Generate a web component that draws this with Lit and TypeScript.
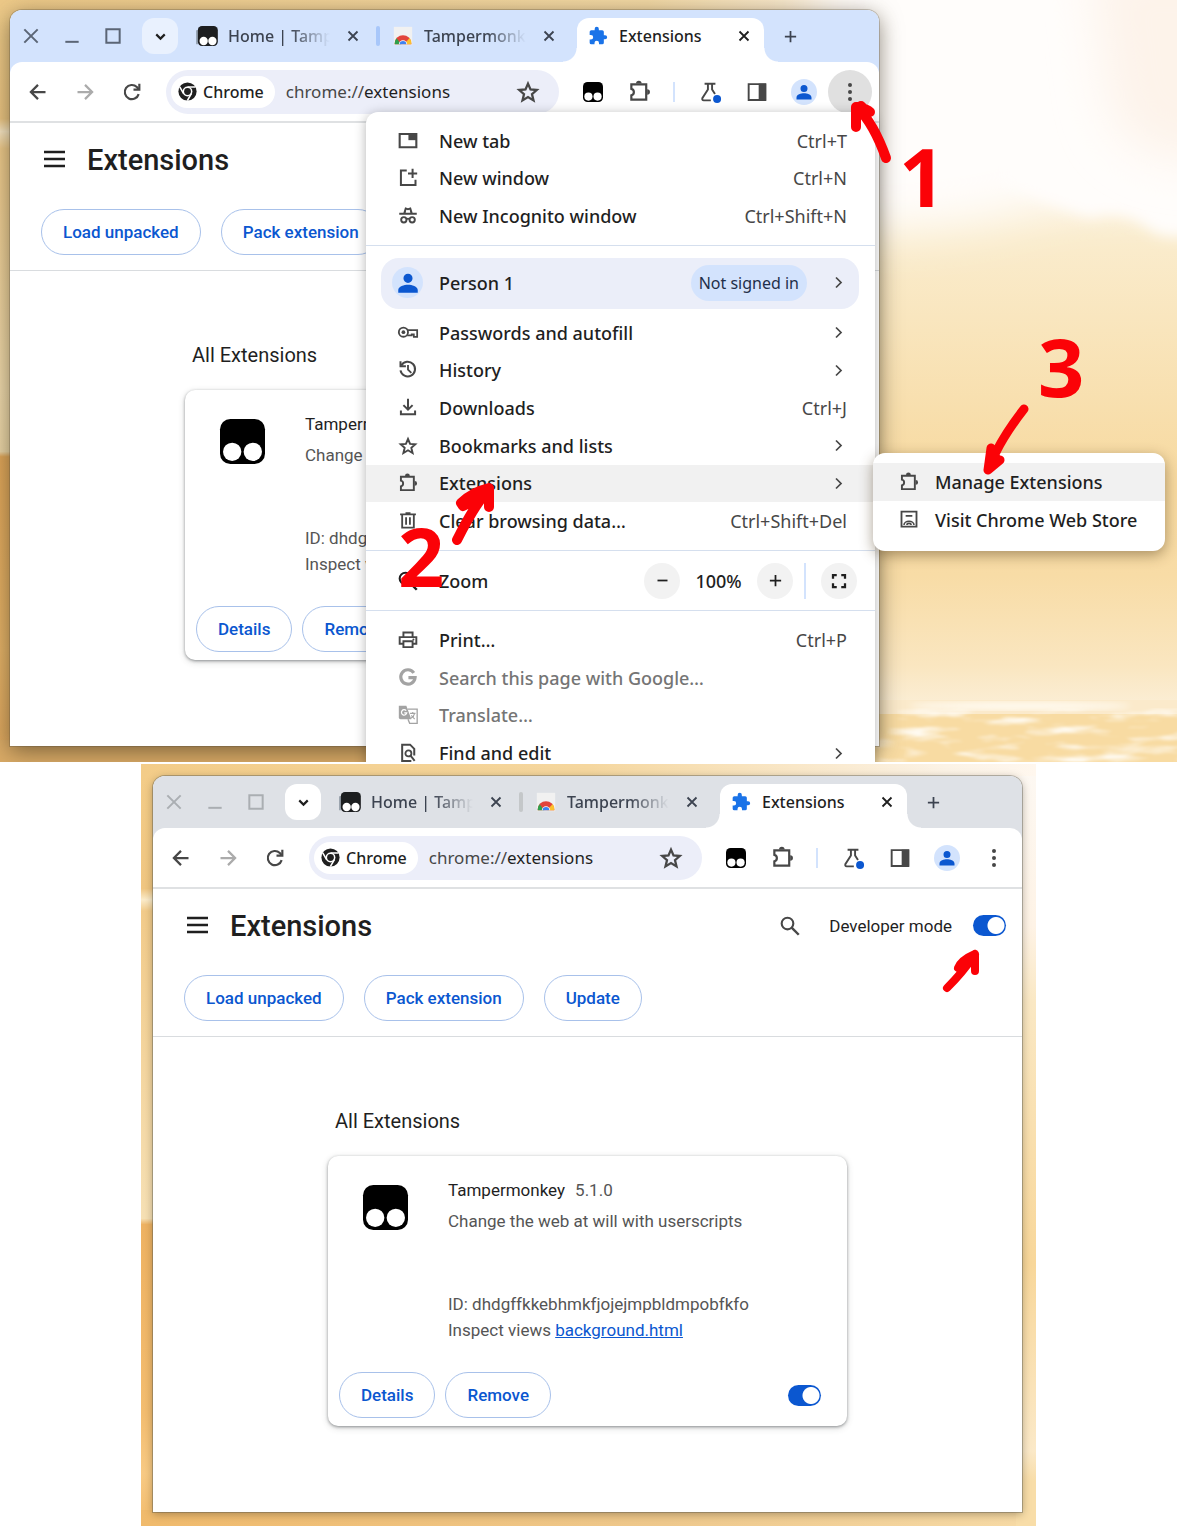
import { LitElement, html, svg, css, nothing } from "lit";
import { customElement, property } from "lit/decorators.js";
import { classMap } from "lit/directives/class-map.js";

const line = (d: string, w = 2) =>
  svg`<path d=${d} fill="none" stroke="currentColor" stroke-width=${w} />`;
const solid = (d: string) => svg`<path d=${d} fill="currentColor" fill-rule="evenodd" />`;

const PUZZLE = "M3.500 4.500H19V20.500H3.500V16C7 15.400 7 9.800 3.500 9.200Z";

const ICONS: Record<string, unknown> = {
  close: line("M6 6L18 18M18 6L6 18", 2.4),
  winClose: line("M4 4L20 20M20 4L4 20", 2.4),
  winMin: line("M4 19H20", 2.4),
  winMax: line("M4 4H20V20H4Z", 2.4),
  down: line("M6 9L12 15L18 9", 3),
  plus: line("M12 3V21M3 12H21", 2.8),
  minus: line("M4 12H20", 2.8),
  right: line("M8 4L16 12L8 20", 2.8),
  back: line("M21 12H4M12 3.500L3.500 12L12 20.500", 2.7),
  forward: line("M3 12H20M12 3.500L20.500 12L12 20.500", 2.7),
  reload: svg`${line("M20 14.500A8.500 8.500 0 1 1 17.800 6L20 8.600", 2.6)}${line("M20.800 2.200V9.200H13.800", 2.6)}`,
  star: line("M12 3.600L14.5 9.4L20.8 10L16 14.2L17.5 20.4L12 17.1L6.5 20.4L8 14.2L3.2 10L9.5 9.4Z", 2.3),
  monkey: svg`<rect width="24" height="24" rx="5.500" fill="#000" />
    <circle cx="6.500" cy="17.500" r="4.900" fill="#fff" /><circle cx="17.500" cy="17.500" r="4.900" fill="#fff" />`,
  monkeyTab: svg`<path d="M0 5V22" stroke="#7c8794" stroke-width="1.600" />
    <rect x="1" y="0" width="24" height="24" rx="5" fill="#1c1e20" />
    <circle cx="8" cy="18" r="5" fill="#fff" /><circle cx="18.500" cy="18" r="5" fill="#fff" />`,
  store: svg`<rect x="1" y="1" width="22" height="22" fill="#f1f1f1" />
    <path d="M2 21A10 10 0 0 1 22 21L22 22H2Z" fill="#e2443a" />
    <path d="M2 22A10.500 10.500 0 0 1 4.200 14.600L10 22Z" fill="#2fa04c" />
    <path d="M22 22A10 10 0 0 0 20 14.500L13 22Z" fill="#fbc02d" />
    <path d="M7 22A5 5 0 0 1 17 22Z" fill="#fff" /><path d="M8 22A4 4 0 0 1 16 22Z" fill="#3f82f0" />`,
  puzzleFill: solid("M20.500 11H19V7a2 2 0 0 0-2-2h-4V3.500a2.500 2.500 0 0 0-5 0V5H4a2 2 0 0 0-2 2v3.800h1.500a2.700 2.700 0 0 1 0 5.400H2V20a2 2 0 0 0 2 2h3.800v-1.500a2.700 2.700 0 0 1 5.400 0V22H17a2 2 0 0 0 2-2v-4h1.500a2.500 2.500 0 0 0 0-5z"),
  puzzle: svg`${line(PUZZLE, 2.3)}${solid("M8.400 3.600a2.900 2.900 0 0 1 5.800 0ZM20 9.600a2.900 2.900 0 0 1 0 5.800Z")}`,
  chrome: svg`<circle cx="12" cy="12" r="11.500" fill="currentColor" /><circle cx="12" cy="12" r="6.200" fill="#fff" />
    <circle cx="12" cy="12" r="4.300" fill="currentColor" />
    <path d="M12 6.400H22.200M7.100 14.800L2.200 6.200M16.900 14.800L11.800 23.500" stroke="#fff" stroke-width="2" />`,
  flask: svg`${line("M5.500 2H18.500M9.500 2V9L2.800 19.500Q2.200 22 4.500 22H13M14.500 2V9L18 14.500", 2.3)}
    <circle cx="20.500" cy="20.500" r="4.800" fill="#0b57d0" />`,
  panel: svg`${line("M2 2.500H22V21.500H2Z", 2.300)}${solid("M14 2H23V22H14Z")}`,
  person: solid("M12 3.500a4.200 4.200 0 1 1 0 8.400 4.200 4.200 0 0 1 0-8.400ZM3 21V18.500C3 15 8.500 13.500 12 13.500S21 15 21 18.500V21Z"),
  dots: svg`<circle cx="12" cy="3.500" r="2.400" fill="currentColor" /><circle cx="12" cy="12" r="2.400" fill="currentColor" />
    <circle cx="12" cy="20.500" r="2.400" fill="currentColor" />`,
  burger: line("M0 3.500H24M0 11.500H24M0 19.500H24", 2.900),
  search: svg`<circle cx="9" cy="9" r="7" fill="none" stroke="currentColor" stroke-width="2.500" />${line("M14 14L22.500 22.500", 2.900)}`,
  tab: svg`${line("M2 3.500H22V19.500H2Z", 2.500)}${solid("M12.500 3.500H22V11H12.500Z")}`,
  newWindow: line("M10.500 3H3.500V20.500H21V14M17.500 1V12M12 6.500H23", 2.400),
  incognito: svg`${solid("M6.500 8L8.500 1.500L12 2.600L15.500 1.500L17.500 8H22.500V10.500H1.500V8ZM9.200 8H14.800L14 4.500L12 5.200L10 4.500Z")}
    <circle cx="7" cy="16.500" r="3.200" fill="none" stroke="currentColor" stroke-width="2.300" />
    <circle cx="17" cy="16.500" r="3.200" fill="none" stroke="currentColor" stroke-width="2.300" />${line("M10 15.800Q12 14.600 14 15.800", 2)}`,
  key: svg`<circle cx="6.500" cy="11" r="5.500" fill="none" stroke="currentColor" stroke-width="2.200" />
    <circle cx="6.500" cy="11" r="2.200" fill="currentColor" />${line("M11 8.500H23V16.500H19V13.500H16.500V14.800H11", 2.100)}`,
  history: svg`${line("M4 6.500A8.800 8.800 0 1 1 3 12.500", 2.400)}${line("M3 1.500V7.500H9.500", 2.400)}${line("M12 6V11.500L16 15.500", 2.200)}`,
  download: line("M12 1V13.500M6.500 8.500L12 14L17.500 8.500M3.500 15V19.500H20.500V15", 2.400),
  trash: line("M2.500 4H21.500M9 2.500H15M5 4V20H19V4M9.700 7.500V16.500M14.300 7.500V16.500", 2.200),
  print: svg`${line("M6.500 7.500V3H17.500V7.500M6 16.500H2V8.500H22V16.500H18M6.500 13.500H17.500V20.500H6.500Z", 2.300)}<circle cx="18.500" cy="11.500" r="1.200" fill="currentColor" />`,
  google: line("M19 5.800A8.600 8.600 0 1 0 20.500 11.500H12.500", 3.800),
  translate: svg`<path d="M1 1H10L16 17H3Q1 17 1 15Z" fill="currentColor" />
    <path d="M11.500 5H23V22H14L12 17" fill="none" stroke="currentColor" stroke-width="1.600" />
    <path d="M9.800 6.800A3.200 3.200 0 1 0 10.500 9.500H7.500" fill="none" stroke="#fff" stroke-width="1.500" />
    <path d="M14.500 10H21M17.700 8.500V10M20 10Q19 14 15.500 16M16 12.500L20 17" fill="none" stroke="currentColor" stroke-width="1.300" />`,
  find: svg`${line("M19.500 15V7L14.500 2H5V21.500H16", 2.400)}<circle cx="12.500" cy="12.500" r="3.600" fill="none" stroke="currentColor" stroke-width="2.200" />${line("M15 15L20 21.500", 2.400)}`,
  fullscreen: line("M4 9V4H9M15 4H20V9M20 15V20H15M9 20H4V15", 3),
  shop: svg`${line("M3 2H21V20H3Z", 2.200)}${line("M8 7H16M6 18A6 4.500 0 0 1 18 18M9.500 18A2.500 2 0 0 1 14.500 18", 1.900)}`,
};

@customElement("ui-icon")
class UiIcon extends LitElement {
  @property() name = "";
  static styles = css`
    :host { display: inline-flex; flex: none; width: 20px; height: 20px; }
    svg { display: block; width: 100%; height: 100%; overflow: visible; }
  `;
  render() {
    return html`<svg viewBox="0 0 24 24" aria-hidden="true">${ICONS[this.name] ?? nothing}</svg>`;
  }
}

const base = css`
  * { box-sizing: border-box; }
  button {
    display: inline-flex; align-items: center; justify-content: center; flex: none;
    margin: 0; padding: 0; border: 0; background: none; color: inherit; font: inherit;
  }
`;

@customElement("browser-window")
class BrowserWindow extends LitElement {
  @property({ type: Boolean, reflect: true }) inactive = false;
  @property({ type: Boolean, attribute: "menu-open" }) menuOpen = false;

  static styles = [base, css`
    :host {
      display: block; border-radius: 12px 12px 0 0; background: #fff; color: #1f1f1f;
      font: 500 16px/20px "Noto Sans", sans-serif;
      box-shadow: 0 0 0 1px rgba(90, 80, 60, .3), 0 5px 22px rgba(60, 50, 30, .6);
      --strip: #d3e3fd; --chip: #e9f1fe; --tick: #a8c7fa; --ctl: #5b6575;
    }
    :host([inactive]) {
      --strip: #dee1e6; --chip: #fff; --tick: #c4c7c9; --ctl: #aaaeb2;
      box-shadow: 0 0 0 1px rgba(90, 90, 80, .4), 0 2px 8px rgba(60, 50, 30, .4);
    }
    .strip {
      display: flex; align-items: center; height: 52px; padding-left: 11px;
      border-radius: 12px 12px 0 0; background: var(--strip); color: #3c4350;
    }
    .ctl { width: 41px; color: var(--ctl); }
    .ctl:first-child { width: 20px; margin-right: 10px; }
    .ctl.mid { width: 42px; }
    .drop { width: 36px; height: 36px; margin: 0 18px 0 8px; border-radius: 12px; background: var(--chip); color: #1f1f1f; }
    .drop ui-icon { width: 17px; height: 17px; }
    .tab { display: flex; align-items: center; flex: 0 1 auto; min-width: 0; }
    .fav { width: 20px; height: 20px; margin: 0 11px 0 1px; }
    .label {
      flex: none; width: 104px; overflow: hidden; white-space: nowrap;
      -webkit-mask-image: linear-gradient(90deg, #000 60%, transparent 98%);
      mask-image: linear-gradient(90deg, #000 60%, transparent 98%);
    }
    .x { width: 22px; height: 22px; margin-left: 10px; }
    .x ui-icon { width: 18px; height: 18px; }
    .tick { flex: none; width: 4px; height: 20px; margin: 0 12px; border-radius: 2px; background: var(--tick); }
    .active {
      position: relative; align-self: flex-end; flex: none; width: 187px; height: 44px; margin-left: 17px; padding: 0 9px 8px 10px;
      border-radius: 12px 12px 0 0; background: #fff; color: #1f1f1f;
    }
    .active::before, .active::after {
      content: ""; position: absolute; bottom: 0; width: 14px; height: 14px;
    }
    .active::before { right: 100%; background: radial-gradient(circle at 0 0, transparent 13px, #fff 14px); }
    .active::after { left: 100%; background: radial-gradient(circle at 100% 0, transparent 13px, #fff 14px); }
    .active .fav { color: #1a73e8; }
    .active .label { flex: 1; -webkit-mask-image: none; mask-image: none; }
    .new { width: 28px; height: 28px; margin-left: 12px; }
    .new ui-icon { width: 15px; height: 15px; }
    .strip-back { background: var(--strip); }
    .toolbar {
      display: flex; align-items: center; height: 61px; padding: 0 5px 0 4px;
      border-radius: 12px 12px 0 0; border-bottom: 2px solid #dfe1e3; color: #474747;
      background: #fff;
    }
    .tool { width: 47px; height: 44px; border-radius: 22px; }
    .tool.off { color: #ababab; }
    .tool.wide ui-icon { width: 23px; height: 23px; }
    .tool.lit { width: 44px; margin: 0 2px 0 1px; background: #e0e0e0; }
    .omni {
      display: flex; align-items: center; flex: 1; min-width: 0; height: 44px; margin: 0 10px 0 11px;
      padding: 0 19px 0 5px; border-radius: 22px; background: #eceef9;
    }
    .chip {
      display: flex; align-items: center; gap: 6px; flex: none; height: 32px; padding: 0 11px 0 7px;
      border-radius: 16px; background: #fff; color: #1f1f1f;
    }
    .chip ui-icon { width: 19px; height: 19px; }
    .url {
      flex: 1; min-width: 0; white-space: nowrap; margin-left: 11px;
      font-weight: 400; font-size: 17px; color: #474747;
    }
    .url b { font-weight: 400; color: #1f1f1f; }
    .omni ui-icon.star { width: 24px; height: 24px; }
    .bar { flex: none; width: 2px; height: 20px; margin: 0 11px 0 10px; background: #d3e3fd; }
    .avatar { display: flex; align-items: center; justify-content: center; width: 26px; height: 26px; border-radius: 50%; background: #d3e3fd; color: #0b57d0; }
    .page { font-family: Roboto, sans-serif; font-weight: 400; font-size: 17px; }
    .head { display: flex; align-items: center; height: 73px; padding: 0 16px 0 34px; }
    .burger ui-icon { width: 21px; height: 21px; }
    h1 { flex: 1; margin: 0 0 0 22px; font-size: 29px; line-height: 32px; font-weight: 500; }
    h2 { margin: 0; padding: 0 7px; font-size: 20px; line-height: 24px; font-weight: 400; }
    .find { width: 20px; margin-right: 29px; color: #474747; }
    .switch { display: flex; align-items: center; gap: 21px; }
    .switch input {
      appearance: none; flex: none; width: 33px; height: 21px; margin: 0; border-radius: 11px;
      background: radial-gradient(circle at 23px 50%, #fff 8px, #0b57d0 9px);
    }
    .actions { display: flex; gap: 20px; padding: 13px 31px 15px; border-bottom: 1px solid #d9dcdf; }
    .pill {
      height: 46px; padding: 0 21px; border: 1px solid #a8c1ea; border-radius: 23px;
      color: #0b57d0; font-weight: 500; font-size: 17px; white-space: nowrap;
    }
    .list { max-width: 519px; margin: 0 auto; padding: 72px 0 86px; }
    .card {
      display: grid; grid-template-columns: 45px 1fr; column-gap: 40px;
      margin-top: 23px; padding: 24px 26px 8px 35px; border-radius: 10px; background: #fff;
      box-shadow: 0 1px 3px rgba(60, 64, 67, .5), 0 2px 7px rgba(60, 64, 67, .2); color: #5f6368;
    }
    .logo { width: 45px; height: 45px; margin-top: 5px; }
    .info { font-size: 17px; line-height: 20px; white-space: nowrap; color: #555; }
    .info p { margin: 0; }
    .info .name { color: #1f1f1f; margin-right: 10px; }
    .info .desc { margin: 11px 0 63px; }
    .info .views { margin-top: 6px; }
    a { color: #0b57d0; }
    .foot { grid-column: 1 / -1; display: flex; align-items: center; gap: 10px; margin: 32px 0 0 -24px; }
    .foot .switch { margin-left: auto; }
  `];

  private tool(icon: string, label: string, cls = {}) {
    return html`<button class=${classMap({ tool: true, ...cls })} aria-label=${label}><ui-icon name=${icon}></ui-icon></button>`;
  }

  private tab(icon: string, text: string, active = false) {
    return html`<div class=${classMap({ tab: true, active })}>
      <ui-icon class="fav" name=${icon}></ui-icon><span class="label">${text}</span>
      <button class="x" aria-label="Close tab"><ui-icon name="close"></ui-icon></button>
    </div>`;
  }

  render() {
    return html`
      <div class="strip">
        <button class="ctl" aria-label="Close"><ui-icon name="winClose"></ui-icon></button>
        <button class="ctl" aria-label="Minimize"><ui-icon name="winMin"></ui-icon></button>
        <button class="ctl mid" aria-label="Maximize"><ui-icon name="winMax"></ui-icon></button>
        <button class="drop" aria-label="Search tabs"><ui-icon name="down"></ui-icon></button>
        ${this.tab("monkeyTab", "Home | Tampermonkey")}
        <span class="tick"></span>
        ${this.tab("store", "Tampermonkey")}
        ${this.tab("puzzleFill", "Extensions", true)}
        <button class="new" aria-label="New tab"><ui-icon name="plus"></ui-icon></button>
      </div>
      <div class="strip-back">
        <div class="toolbar">
          ${this.tool("back", "Back")}${this.tool("forward", "Forward", { off: true })}${this.tool("reload", "Reload")}
          <div class="omni">
            <span class="chip"><ui-icon name="chrome"></ui-icon>Chrome</span>
            <span class="url">chrome://<b>extensions</b></span>
            <button aria-label="Bookmark"><ui-icon class="star" name="star"></ui-icon></button>
          </div>
          ${this.tool("monkey", "Tampermonkey")}${this.tool("puzzle", "Extensions", { wide: true })}
          <span class="bar"></span>
          ${this.tool("flask", "Labs")}${this.tool("panel", "Side panel")}
          <button class="tool" aria-label="Profile"><span class="avatar"><ui-icon name="person"></ui-icon></span></button>
          ${this.tool("dots", "Menu", { lit: this.menuOpen })}
        </div>
      </div>
      <main class="page">
        <div class="head">
          <button class="burger" aria-label="Main menu"><ui-icon name="burger"></ui-icon></button>
          <h1>Extensions</h1>
          <button class="find" aria-label="Search extensions"><ui-icon name="search"></ui-icon></button>
          <label class="switch">Developer mode<input type="checkbox" role="switch" checked /></label>
        </div>
        <div class="actions">
          <button class="pill">Load unpacked</button>
          <button class="pill">Pack extension</button>
          <button class="pill">Update</button>
        </div>
        <section class="list">
          <h2>All Extensions</h2>
          <article class="card">
            <ui-icon class="logo" name="monkey"></ui-icon>
            <div class="info">
              <p><span class="name">Tampermonkey</span>5.1.0</p>
              <p class="desc">Change the web at will with userscripts</p>
              <p>ID: dhdgffkkebhmkfjojejmpbldmpobfkfo</p>
              <p class="views">Inspect views <a href="#background">background.html</a></p>
            </div>
            <div class="foot">
              <button class="pill">Details</button>
              <button class="pill">Remove</button>
              <label class="switch"><input type="checkbox" role="switch" aria-label="Tampermonkey enabled" checked /></label>
            </div>
          </article>
        </section>
      </main>`;
  }
}

interface Item { icon: string; text: string; keys?: string; more?: boolean; off?: boolean; open?: boolean; }

const FIRST: Item[] = [
  { icon: "tab", text: "New tab", keys: "Ctrl+T" },
  { icon: "newWindow", text: "New window", keys: "Ctrl+N" },
  { icon: "incognito", text: "New Incognito window", keys: "Ctrl+Shift+N" },
];
const SECOND: Item[] = [
  { icon: "key", text: "Passwords and autofill", more: true },
  { icon: "history", text: "History", more: true },
  { icon: "download", text: "Downloads", keys: "Ctrl+J" },
  { icon: "star", text: "Bookmarks and lists", more: true },
  { icon: "puzzle", text: "Extensions", more: true, open: true },
  { icon: "trash", text: "Clear browsing data…", keys: "Ctrl+Shift+Del" },
];
const THIRD: Item[] = [
  { icon: "print", text: "Print…", keys: "Ctrl+P" },
  { icon: "google", text: "Search this page with Google…", off: true },
  { icon: "translate", text: "Translate…", off: true },
  { icon: "find", text: "Find and edit", more: true },
];

@customElement("app-menu")
class AppMenu extends LitElement {
  static styles = [base, css`
    :host {
      display: block; border-radius: 12px 12px 0 0; background: #fff; color: #1f1f1f;
      font: 500 18px/22px "Noto Sans", sans-serif; padding-top: 10px;
      box-shadow: 0 2px 12px rgba(0, 0, 0, .3);
    }
    .group { display: grid; grid-auto-rows: 1fr; height: 226px; margin-bottom: 10px; }
    .group.three { height: 113px; }
    .group.four { height: 151px; margin-top: 10px; }
    .rule { height: 1px; margin: 0; border: 0; background: #d5dfee; }
    .cell { position: relative; display: grid; }
    .item { display: flex; align-items: center; justify-content: flex-start; gap: 21px; width: 100%; padding: 0 28px 0 32px; white-space: nowrap; }
    .item > span:first-of-type { flex: 1; text-align: left; }
    .item ui-icon { color: #474747; }
    .item .more { width: 15px; height: 15px; margin-right: 1px; }
    .keys { font-weight: 400; color: #474747; }
    .item:disabled { color: #757575; }
    .item:disabled ui-icon { color: #a3a3a3; }
    .open { background: #f1f1f1; }
    .person {
      display: flex; align-items: center; width: calc(100% - 31px); height: 51px; margin: 12px 16px 5px 15px; padding: 0 13px 2px 11px;
      border-radius: 18px; background: #ebeef9;
    }
    .avatar { display: flex; align-items: center; justify-content: center; width: 31px; height: 31px; margin-right: 16px; border-radius: 50%; background: #d3e3fd; color: #0b57d0; }
    .avatar ui-icon { width: 26px; height: 26px; }
    .person .who { flex: 1; text-align: left; }
    .badge { padding: 7px 8px; margin-right: 24px; border-radius: 18px; background: #d3e3fd; font-weight: 400; font-size: 16px; color: #1f2f4a; }
    .person .more { width: 15px; height: 15px; color: #474747; }
    .zoom { display: flex; align-items: center; height: 59px; padding: 0 18px 0 32px; }
    .zoom .name { flex: 1; margin-left: 21px; }
    .zoom output { width: 77px; text-align: center; }
    .round { width: 36px; height: 36px; border-radius: 50%; background: #f2f2f2; }
    .round ui-icon { width: 15px; height: 15px; }
    .round ui-icon.full { width: 18px; height: 18px; }
    .split { width: 2px; height: 36px; margin: 0 15px 0 11px; background: #d3e3fd; }
    .sub {
      position: absolute; left: calc(100% - 2px); top: -12px; z-index: 1; min-width: 292px; padding: 10px 0 12px;
      border-radius: 12px; background: #fff; box-shadow: 0 4px 14px rgba(70, 50, 20, .45);
    }
    .sub .item { height: 38px; padding: 0 26px; gap: 16px; }
  `];

  private item(i: Item) {
    return html`<button class=${classMap({ item: true, open: !!i.open })} ?disabled=${!!i.off}>
      <ui-icon name=${i.icon}></ui-icon><span>${i.text}</span>
      ${i.keys ? html`<span class="keys">${i.keys}</span>` : nothing}
      ${i.more ? html`<ui-icon class="more" name="right"></ui-icon>` : nothing}
    </button>`;
  }

  private cell(i: Item) {
    return html`<div class="cell">${this.item(i)}${i.open
      ? html`<div class="sub">
          ${this.item({ icon: "puzzle", text: "Manage Extensions", open: true })}
          ${this.item({ icon: "shop", text: "Visit Chrome Web Store" })}
        </div>`
      : nothing}</div>`;
  }

  render() {
    return html`
      <div class="group three">${FIRST.map((i) => this.cell(i))}</div>
      <hr class="rule" />
      <button class="person">
        <span class="avatar"><ui-icon name="person"></ui-icon></span>
        <span class="who">Person 1</span><span class="badge">Not signed in</span>
        <ui-icon class="more" name="right"></ui-icon>
      </button>
      <div class="group">${SECOND.map((i) => this.cell(i))}</div>
      <hr class="rule" />
      <div class="zoom">
        <ui-icon name="search"></ui-icon><span class="name">Zoom</span>
        <button class="round" aria-label="Zoom out"><ui-icon name="minus"></ui-icon></button>
        <output>100%</output>
        <button class="round" aria-label="Zoom in"><ui-icon name="plus"></ui-icon></button>
        <span class="split"></span>
        <button class="round" aria-label="Full screen"><ui-icon class="full" name="fullscreen"></ui-icon></button>
      </div>
      <hr class="rule" />
      <div class="group four">${THIRD.map((i) => this.cell(i))}</div>`;
  }
}

@customElement("app-root")
class AppRoot extends LitElement {
  static styles = [base, css`
    :host { display: block; background: #fff; }
    .scene { position: relative; overflow: hidden; }
    .first { padding: 10px 10px 16px; background: linear-gradient(90deg, #edc988 0, #f3d9a5 55%, #fbf0e0 73%, #fff 80%); }
    .second {
      width: 77%; max-width: 895px; margin: 2px auto 0; padding: 12px 14px 14px 12px;
      background: linear-gradient(90deg, #f3cc88 0, #f5d79f 50%, #fcf3e6 90%, #fff7ee);
    }
    .scenery { position: absolute; inset: 0; width: 100%; height: 100%; }
    .desk { position: relative; max-width: 869px; }
    .menu { position: absolute; top: 102px; right: 4px; width: 509px; }
    .marks { position: absolute; left: 0; top: 0; z-index: 2; width: 1177px; height: 762px; overflow: visible; }
    .num {
      position: absolute; z-index: 2; color: #fb0207; font: 700 81px/82px "Open Sans", sans-serif;
    }
    .n1 { left: 899px; top: 135px; }
    .n2 { left: 398px; top: 515px; }
    .n3 { left: 1038px; top: 325px; }
  `];

  private stroke(d: string, w = 9) {
    return svg`<path d=${d} fill="none" stroke="#fb0207" stroke-width=${w} stroke-linecap="round" stroke-linejoin="round" />`;
  }

  render() {
    return html`
      <section class="scene first">
        <svg class="scenery" viewBox="0 0 1177 762" preserveAspectRatio="none" aria-hidden="true">
          <defs>
            <linearGradient id="sand" x1="0" y1="0" x2="0" y2="1">
              <stop offset="0" stop-color="#fdf6ea" /><stop offset=".16" stop-color="#faeccd" />
              <stop offset=".6" stop-color="#f7d99f" /><stop offset=".76" stop-color="#f8dca6" />
              <stop offset=".92" stop-color="#fae6c0" /><stop offset="1" stop-color="#fbefd8" />
            </linearGradient>
            <linearGradient id="edge" x1="0" y1="0" x2="0" y2="1">
              <stop offset="0" stop-color="#edca88" /><stop offset=".14" stop-color="#e9c481" />
              <stop offset=".157" stop-color="#f6e6c4" /><stop offset=".18" stop-color="#ecc98a" />
              <stop offset=".5" stop-color="#edd9ac" /><stop offset=".585" stop-color="#ead6a8" />
              <stop offset=".592" stop-color="#dea558" /><stop offset=".85" stop-color="#e3b267" />
              <stop offset="1" stop-color="#dca55c" />
            </linearGradient>
            <filter id="haze" x="-30%" y="-30%" width="160%" height="160%"><feGaussianBlur stdDeviation="24" /></filter>
            <filter id="soft" x="-20%" y="-20%" width="140%" height="140%"><feGaussianBlur stdDeviation="7" /></filter>
            <filter id="foam"><feGaussianBlur stdDeviation="3" /></filter>
            <filter id="ripple" x="0" y="0" width="100%" height="100%">
              <feTurbulence type="fractalNoise" baseFrequency=".02 .11" numOctaves="3" seed="4" />
              <feColorMatrix values="0 0 0 0 1  0 0 0 0 .96  0 0 0 0 .88  3 0 0 0 -1.500" />
              <feGaussianBlur stdDeviation="1" />
            </filter>
          </defs>
          <rect y="14" width="14" height="748" fill="url(#edge)" />
          <rect y="740" width="880" height="22" fill="#d9aa66" />
          <rect x="860" y="150" width="320" height="560" fill="url(#sand)" />
          <path d="M820 -60H1240V195Q1120 185 1040 205Q950 235 820 230Z" fill="#fffdfb" filter="url(#haze)" />
          <path d="M1000 -40H1200V235Q1160 242 1145 226Q1120 208 1090 218Q1050 206 1000 180Z" fill="#fffdfb" filter="url(#soft)" />
          <path d="M1090 -40H1240V160Q1130 170 1110 110Z" fill="#fdf3ea" filter="url(#haze)" />
          <rect x="870" y="700" width="310" height="16" fill="#fbeacb" />
          <rect x="870" y="714" width="310" height="48" fill="#f8dba2" />
          <ellipse cx="1020" cy="706" rx="110" ry="4" fill="#fffaf0" filter="url(#foam)" />
          <rect x="870" y="708" width="310" height="54" filter="url(#ripple)" />
        </svg>
        <div class="desk">
          <browser-window menu-open></browser-window>
          <app-menu class="menu"></app-menu>
        </div>
        <svg class="marks" viewBox="0 0 1177 762" aria-hidden="true">
          ${this.stroke("M856 107V127M857 107Q867 109 870 112M857 107Q874 124 886 158M861 106L867 112", 10)}
          ${this.stroke("M489 488Q472 492 461 503L463 506Q476 500 489 489V507M488 490Q474 506 457 540", 10)}
          ${this.stroke("M1024 409Q1006 432 996 452L988 470M991 448L988 470L1000 460M992 450L996 458", 9)}
        </svg>
        <span class="num n1">1</span><span class="num n2">2</span><span class="num n3">3</span>
      </section>
      <section class="scene second">
        <svg class="scenery" viewBox="0 0 895 762" preserveAspectRatio="none" aria-hidden="true">
          <defs>
            <linearGradient id="left" x1="0" y1="0" x2="0" y2="1">
              <stop offset="0" stop-color="#f3cc88" /><stop offset=".15" stop-color="#f0c681" />
              <stop offset=".165" stop-color="#fbeccb" /><stop offset=".18" stop-color="#f2cb8a" />
              <stop offset=".59" stop-color="#f6e0b4" /><stop offset=".598" stop-color="#eeb262" />
              <stop offset=".85" stop-color="#f3bd70" /><stop offset=".93" stop-color="#f8ca84" />
              <stop offset="1" stop-color="#f2bb6c" />
            </linearGradient>
            <linearGradient id="right" x1="0" y1="0" x2="0" y2="1">
              <stop offset="0" stop-color="#fdf8f2" /><stop offset=".2" stop-color="#fef3e6" />
              <stop offset=".3" stop-color="#fae8c4" /><stop offset=".65" stop-color="#f8d79a" />
              <stop offset=".9" stop-color="#fbe9c8" /><stop offset=".94" stop-color="#f8dda8" />
              <stop offset="1" stop-color="#f8dda8" />
            </linearGradient>
            <linearGradient id="floor" x1="0" x2="1">
              <stop offset="0" stop-color="#f0ba6c" /><stop offset=".6" stop-color="#eec88c" /><stop offset="1" stop-color="#f6d9a4" />
            </linearGradient>
          </defs>
          <rect y="12" width="14" height="750" fill="url(#left)" />
          <rect x="875" y="12" width="20" height="750" fill="url(#right)" />
          <rect y="746" width="875" height="16" fill="url(#floor)" />
        </svg>
        <div class="desk"><browser-window inactive></browser-window></div>
        <svg class="marks" viewBox="0 0 1177 762" aria-hidden="true">
          ${this.stroke("M834 190Q820 196 817 204H820Q829 198 834 190V207M832 193Q822 208 806 224", 8)}
        </svg>
      </section>`;
  }
}
